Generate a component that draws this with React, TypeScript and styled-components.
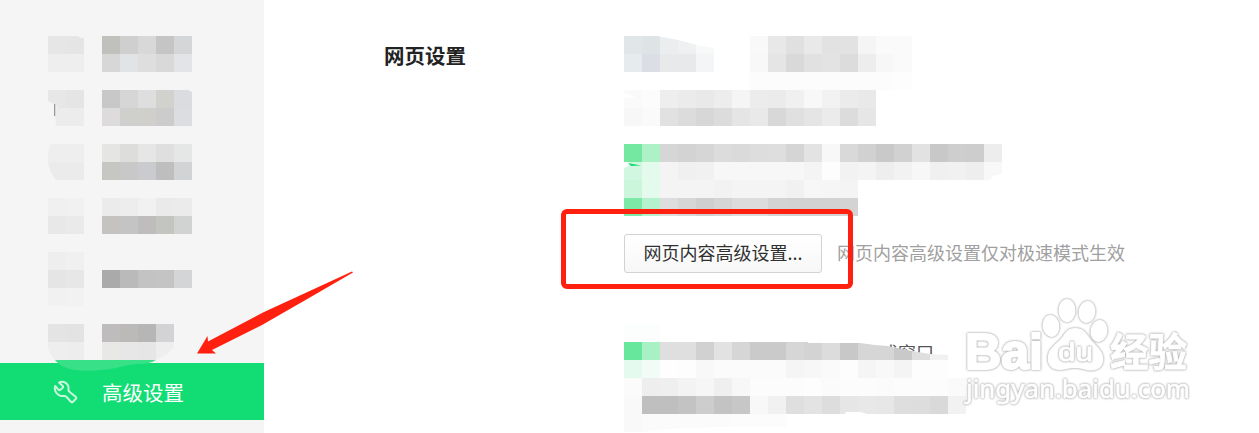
import styled, { createGlobalStyle } from "styled-components"

const GlobalStyle = createGlobalStyle`
  * {
    box-sizing: border-box;
  }
  body {
    margin: 0;
    background: #fff;
    font-family: "Noto Sans CJK SC", "Noto Sans", sans-serif;
    overflow: hidden;
  }
`

const Page = styled.div`
  position: relative;
  display: flex;
  width: 1259px;
  height: 433px;
  overflow: hidden;
`

const Sidebar = styled.nav`
  display: flex;
  flex-direction: column;
  flex-shrink: 0;
  width: 264px;
  padding-top: 36px;
  background: #f5f5f5;
`

const NavItem = styled.div<{ $height: number }>`
  position: relative;
  display: flex;
  align-items: flex-start;
  gap: 18px;
  height: ${(p) => p.$height}px;
  padding-left: 48px;
`

const ActiveItem = styled.div`
  position: relative;
  display: flex;
  align-items: center;
  gap: 24px;
  height: 57px;
  margin-top: 3px;
  padding: 1px 0 0 53px;
  background: #12dd74;
  color: #fff;
  font-size: 20.5px;
  line-height: 30px;
`

const Smear = styled.svg`
  position: absolute;
  left: 48px;
  top: -3px;
`

const Tick = styled.i`
  position: absolute;
  left: 54px;
  top: 14px;
  width: 1px;
  height: 12px;
  background: #999;
  box-shadow: 1px 0 #d8d8d8;
`

const Mosaic = styled.div<{ $cols: number; $clip?: string }>`
  position: relative;
  display: grid;
  flex-shrink: 0;
  grid-template-columns: repeat(${(p) => p.$cols}, 18px);
  grid-auto-rows: 18px;
  width: ${(p) => p.$cols * 18}px;
  clip-path: ${(p) => (p.$clip ? p.$clip : "none")};
`

const Cell = styled.span<{ $color: string }>`
  background: ${(p) => p.$color};
`

const Main = styled.main`
  display: flex;
  padding: 36px 0 0 120px;
`

const Title = styled.h2`
  width: 240px;
  margin: 4px 0 0;
  color: #222;
  font-size: 20.5px;
  font-weight: 700;
  line-height: 30px;
`

const Options = styled.div`
  display: flex;
  flex-direction: column;
  width: 620px;
`

const Row = styled.div`
  display: flex;
  flex-shrink: 0;
  gap: 36px;
  height: 54px;
`

const Stack = styled.div<{ $height: number }>`
  position: relative;
  display: flex;
  flex-direction: column;
  flex-shrink: 0;
  align-items: flex-start;
  height: ${(p) => p.$height}px;
`

const ButtonRow = styled.div`
  display: flex;
  flex-shrink: 0;
  align-items: center;
  gap: 15px;
  height: 39px;
  margin-bottom: 51px;
`

const Button = styled.button`
  width: 198px;
  height: 39px;
  padding: 0 0 2px;
  border: 1px solid #d2d2d2;
  border-radius: 3px;
  background: linear-gradient(#fff, #f7f7f7);
  color: #303030;
  font-family: inherit;
  font-size: 18px;
  line-height: 35px;
  white-space: nowrap;
`

const Note = styled.span`
  padding-bottom: 3px;
  color: #a0a0a0;
  font-size: 18px;
  line-height: 36px;
  white-space: nowrap;
`

const Remnant = styled.span`
  position: absolute;
  left: 256px;
  top: 14px;
  color: #555;
  font-size: 18px;
  line-height: 28px;
`

const GreenMark = styled.svg`
  position: absolute;
  left: 0;
  top: 18px;
`

const Highlight = styled.div`
  position: absolute;
  left: 561px;
  top: 209px;
  width: 292px;
  height: 80px;
  border: 5px solid #ff2010;
  border-radius: 6px;
`

const Overlay = styled.svg`
  position: absolute;
  left: 0;
  top: 0;
  pointer-events: none;
`

const Outlined = styled.g`
  fill: #fff;
  filter: drop-shadow(0 0 0.8px #aaa) drop-shadow(0 0 0.6px #ccc);
`

// Each row is a space separated list of hex colours, "-" leaves the cell empty.
const Pixels = ({ rows, clip }: { rows: string[]; clip?: string }) => {
  const cells = rows.map((r) => r.split(" "))
  const cols = Math.max(...cells.map((r) => r.length))
  return (
    <Mosaic $cols={cols} $clip={clip}>
      {cells.flatMap((r, y) =>
        Array.from({ length: cols }, (_, x) => {
          const c = r[x] ?? "-"
          return <Cell key={`${y}-${x}`} $color={c === "-" ? "transparent" : `#${c}`} />
        })
      )}
    </Mosaic>
  )
}

const menu = [
  {
    height: 54,
    icon: ["e6e6e6 e5e5e5", "eeeeee eeeeee"],
    label: ["c0c0bd cfcfcf d8d8d8 c5c5c5 d5d6d8", "d7d7d7 e1e4e7 dedede d9d9d9 e2e4e7"],
    iconClip: "polygon(0 0, 29px 0, 33px 2px, 36px 2px, 36px 36px, 0 36px)",
  },
  {
    height: 54,
    icon: ["e7e7e7 e5e5e5", "ececec ececec"],
    label: ["c8c8c8 d6d6d6 dedede d1d1ce dbdcdf", "dddbdc cfcfcd d0cfcc cccccc dcdde0"],
    iconClip: "polygon(0 0, 36px 0, 36px 36px, 8px 36px, 7px 25px, 9px 16px, 6px 14px, 0 11px)",
    labelClip: "polygon(0 0, 86px 0, 90px 2px, 90px 36px, 0 36px)",
    tick: true,
  },
  {
    height: 54,
    icon: ["eeeeee eeeeee", "ebebeb ebebeb"],
    label: ["e5e5e3 dddddb e6e6e6 dfdfdf e4e7e6", "c6c6c3 c8c8c8 cacbce bebebe d2d3d5"],
    iconClip: "polygon(3px 0, 36px 0, 36px 36px, 8px 36px, 4px 30px, 1px 23px, 0 18px, 0 8px)",
  },
  {
    height: 54,
    icon: ["f0f0f0 f1f1f1", "e8e8e8 eaeaea"],
    label: ["ebebeb ededed f1f1f1 eaeaea ebebeb", "c4c3c0 c4c4c4 bfbcbd c3c5c1 d0d3d1"],
  },
  {
    height: 72,
    icon: ["eeeeee f0f0f0", "e5e5e5 e7e7e7", "f1f1f1 f2f2f2"],
    label: ["- - - - -", "aaaaaa bababa c3c3c3 c4c4c4 d4d5d7"],
  },
  {
    height: 36,
    icon: ["e4e4e4 e3e3e3", "eeeeee ededed"],
    label: ["bebcbd bbbab8 b6b6b6 d3d3d5", "e8e8e6 e7e7e7 e6e6e6 eeeeee"],
    iconClip: "polygon(0 0, 36px 0, 36px 36px, 7px 36px, 3px 31px, 0 24px)",
    labelClip: "polygon(0 0, 72px 0, 72px 23px, 65px 30px, 54px 36px, 0 36px)",
  },
]

const Wrench = () => (
  <svg width="25" height="25" viewBox="0 0 25 25" fill="none" stroke="#c9f8de" strokeWidth="2" strokeLinejoin="round">
    <path d="M6 2.600C9 1 13 1.800 14.800 5C15.800 6.800 15.600 8.600 15.500 10C15.500 10.900 15.800 11.300 16.400 11.800L22.600 16.800C23.400 17.500 23.400 18.200 22.800 18.900L19.800 22C19.200 22.500 18.500 22.400 17.900 21.700L13.600 17C12.900 16.300 12.300 16 11.400 16C8.400 16.200 5.400 15.400 3.400 12.800C1.700 10.600 1.400 8.200 2.200 6L5.300 9.600C6 10.300 6.700 10.300 7.400 9.700L9.600 7.900C10.300 7.300 10.300 6.700 9.700 6Z" />
  </svg>
)

const Watermark = () => (
  <g>
    <Outlined>
      <text x="965" y="369" stroke="#fff" strokeWidth="2.200" fontFamily="Liberation Sans, sans-serif" fontWeight="700" fontSize="50" textLength="78" lengthAdjust="spacingAndGlyphs">
        Bai
      </text>
    </Outlined>
    <Outlined>
      <ellipse cx="1051" cy="326" rx="8.500" ry="11" transform="rotate(-8 1051 326)" />
      <ellipse cx="1067" cy="310.500" rx="8.500" ry="11.500" />
      <ellipse cx="1087" cy="312" rx="8.500" ry="11" transform="rotate(8 1087 312)" />
      <ellipse cx="1099" cy="331" rx="8.500" ry="11" transform="rotate(8 1099 331)" />
      <path d="M1075 328c-6 0-9 3-12 8-4 6-9 8-13 14-4 7-3 16 4 19 7 3 13-1 21-1s13 4 20 2c8-2 10-10 7-17-3-6-9-10-13-16-4-6-7-9-14-9z" />
    </Outlined>
    <Outlined>
      <text x="1058" y="361" stroke="#fff" strokeWidth="0.800" fontFamily="Liberation Sans, sans-serif" fontSize="26" textLength="35" lengthAdjust="spacingAndGlyphs">
        du
      </text>
    </Outlined>
    <Outlined>
      <text x="1110" y="366" stroke="#fff" strokeWidth="0.800" fontFamily="Noto Sans CJK SC, sans-serif" fontWeight="700" fontSize="39" textLength="77" lengthAdjust="spacingAndGlyphs">
        经验
      </text>
    </Outlined>
    <Outlined>
      <text x="966" y="398" stroke="#fff" strokeWidth="0.600" fontFamily="Noto Sans, sans-serif" fontSize="26" textLength="224" lengthAdjust="spacingAndGlyphs">
        jingyan.baidu.com
      </text>
    </Outlined>
  </g>
)

const App = () => (
  <>
    <GlobalStyle />
    <Page>
      <Sidebar>
        {menu.map((item, i) => (
          <NavItem key={i} $height={item.height}>
            <Pixels rows={item.icon} clip={item.iconClip} />
            <Pixels rows={item.label} clip={item.labelClip} />
            {item.tick && <Tick />}
          </NavItem>
        ))}
        <ActiveItem>
          <Smear width="112" height="12">
            <path d="M7 0H108C103 3 98 4 88 4C76 5 68 9 54 10C42 11 30 11 22 9C15 7 10 4 7 0Z" fill="#38e188" />
          </Smear>
          <Wrench />
          高级设置
        </ActiveItem>
      </Sidebar>
      <Main>
        <Title>网页设置</Title>
        <Options>
          <Row>
            <Pixels
              rows={["e1e6e9 dee3e6 ecedee eff0f2 f7f9f9", "e6ebee dbdee4 e8e9ea e8e9ea f3f5f7"]}
              clip="polygon(0 0, 33px 0, 54px 4px, 73px 9px, 90px 12px, 90px 36px, 0 36px)"
            />
            <Pixels
              rows={[
                "f9f9f9 e8e8e8 e0e0e0 e9e9e9 e2e2e2 e2e2e2 f5f5f5 fafafa fafafa",
                "f8f8f8 e5e5e5 d9d9d9 e1e1e1 e3e3e3 dcdcdc ededed f7f7f7 fafafa",
                "fcfcfc fcfcfc fcfcfc fcfcfc fcfcfc fcfcfc fcfcfc fcfcfc fdfdfd",
              ]}
            />
          </Row>
          <Stack $height={54}>
            <Pixels
              rows={[
                "fafafa fcfcfc eeeeee ebebeb e9e9e9 ededed f5f5f5 ececec ebebeb f0f0f0 f8f8f8 f2f2f2 ebebeb e9e9e9",
                "f7f7f7 fafafa e1e1e1 dcdcdc d7d7d7 dcdcdc e5e5e5 e9e9e9 d8d8d8 e0e0e0 e5e5e5 ebebeb dcdcdc e6e6e6",
              ]}
              clip="polygon(0 0, 252px 0, 252px 36px, 0 36px, 0 8px, 12px 7px, 0 3px)"
            />
          </Stack>
          <Stack $height={90}>
            <Pixels
              rows={[
                "74e7a0 adf1c7 d6d6d6 d3d3d3 d6d6d6 dcdcdc dadada dddddd dedede d5d5d5 e3e3e3 f8f8f8 d9d9d9 d1d1d1 c9c9c9 d1d1d1 e2e2e2 c8c8c8 cecece cdcdcd ededed",
                "d2f7e1 e4faed f4f4f4 f0f0f0 f1f1f1 f7f7f7 f7f7f7 f7f7f7 f7f7f7 f7f7f7 f4f4f4 fdfdfd f2f2f2 f4f4f4 eeeeee f2f2f2 f7f7f7 f0f0f0 f1f1f1 eeeeee f8f8f8",
              ]}
              clip="polygon(0 0, 378px 0, 378px 30px, 369px 32px, 366px 36px, 0 36px, 0 24px, 7px 21px, 4px 18px, 0 18px)"
            />
            <Pixels
              rows={[
                "ccf6dc e4faed f4f4f4 f4f4f4 f4f4f4 f2f2f2 f4f4f4 f4f4f4 f4f4f4 f1f1f1 f7f7f7 f6f6f6 f4f4f4",
                "7de9a7 b3f2cc dddddd d6d6d6 cfcfcf d5d5d5 dcdcdc dcdcdc d3d3d3 d2d2d2 d2d2d2 d2d2d2 d3d3d3",
              ]}
            />
            <GreenMark width="20" height="6">
              <path d="M4 1L9 2L17 3.500L7 4Z" fill="#12dd74" />
            </GreenMark>
          </Stack>
          <ButtonRow>
            <Button>网页内容高级设置...</Button>
            <Note>网页内容高级设置仅对极速模式生效</Note>
          </ButtonRow>
          <Stack $height={108}>
            <Remnant>式窗口</Remnant>
            <Pixels
              rows={[
                "fbfefd fcfefd - - - - - - - - - - - - - - - -",
                "66e79b a7f1c5 dfdfdf dfdfdf d1d1d1 e2e2e2 d6d6d6 cacaca cacaca d6d6d6 d3d3d3 dcdcdc c8c8c8 d6d6d6 d6d6d6 c9c9c9 dedede f1f1f1",
                "e4faee f1fcf6 fefefe fdfdfd f8f8f8 fbfbfb fbfbfb fbfbfb fbfbfb f5f5f5 f7f7f7 fafafa fdfdfd f5f5f5 f8f8f8 f4f4f4 fdfdfd fdfdfd",
              ]}
              clip="polygon(0 0, 180px 0, 184px 19px, 236px 19px, 251px 21px, 264px 22px, 288px 27px, 306px 30px, 324px 31px, 324px 54px, 0 54px)"
            />
            <Pixels
              rows={[
                "fbfbfb eeeeee efefef f3f3f3 f6f6f6 efefef f7f7f7 fcfcfc fcfcfc fcfcfc fdfdfd fbfbfb fcfcfc fcfcfc fbfbfb fcfcfc fcfcfc fcfcfc fafafa",
                "f9f9f9 bfbfbf bfbfbf c3c3c3 cdcdcd c3c3c3 c7c7c7 f8f8f8 f1f1f1 dfdfdf e3e3e3 dddddd e6e6e6 e8e8e8 e7e7e7 dedede dddddd d9d9d9 f2f2f2",
              ]}
              clip="polygon(0 0, 342px 0, 342px 36px, 243px 36px, 237px 34px, 222px 34px, 221px 36px, 0 36px)"
            />
            <Pixels
              rows={["f9f9f9 fbfbfb fbfbfb fbfbfb fbfbfb fbfbfb fcfcfc fcfcfc fcfcfc"]}
              clip="polygon(0 0, 162px 0, 162px 13px, 96px 13px, 41px 15px, 24px 18px, 0 18px)"
            />
          </Stack>
        </Options>
      </Main>
      <Highlight />
      <Overlay width="1259" height="433">
        <path d="M352 271.500L353 272.500L309 298L262 325L212 350L216 353.500L197 353.500L207.500 336L208 341.500L264 312Z" fill="#ff2010" />
        <Watermark />
      </Overlay>
    </Page>
  </>
)

export default App
